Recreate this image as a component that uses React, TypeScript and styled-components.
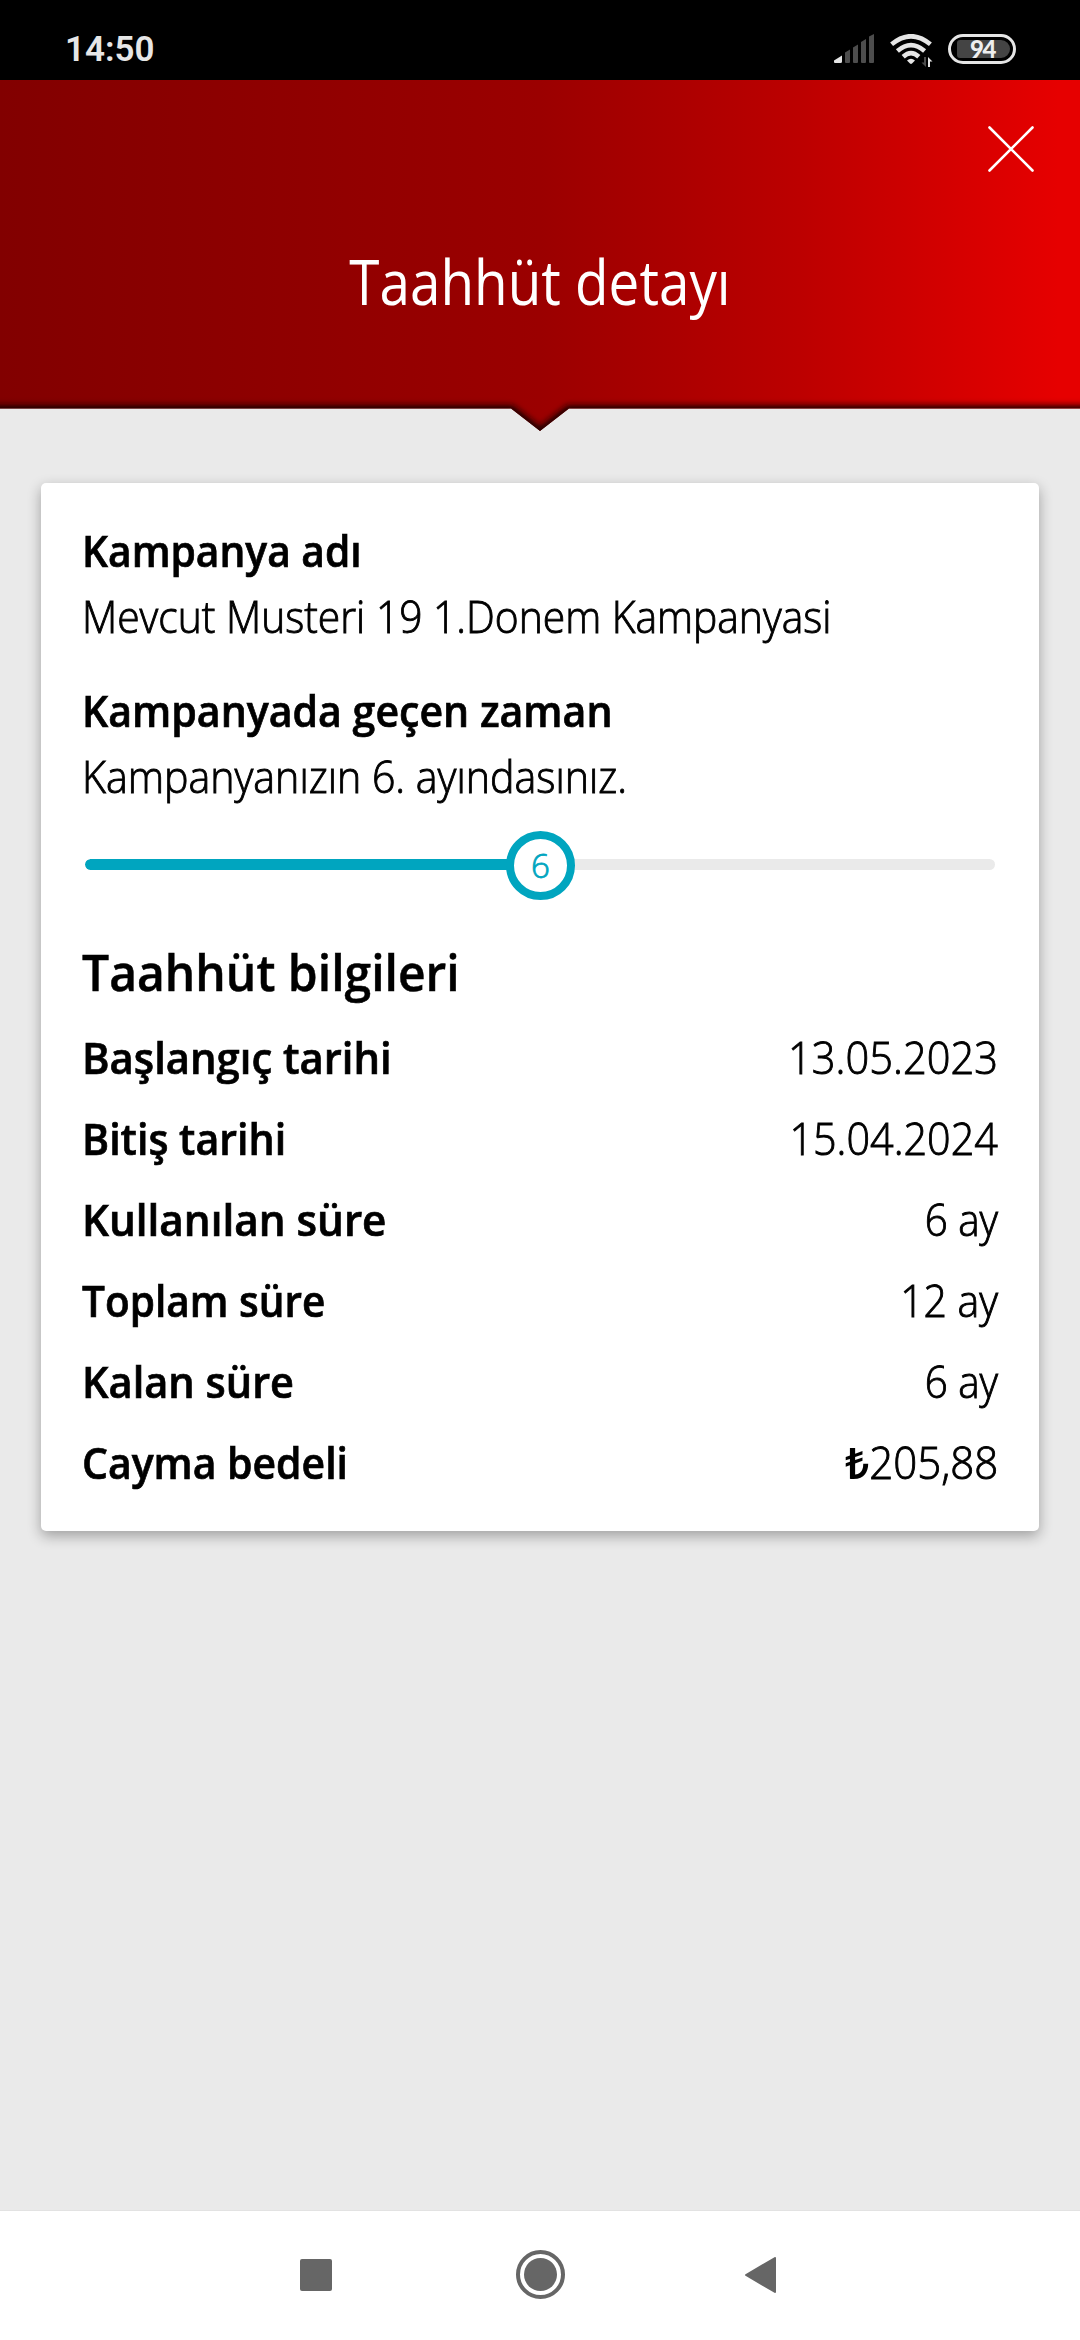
import React from "react";
import styled, { createGlobalStyle } from "styled-components";

const GlobalStyle = createGlobalStyle`
  *, *::before, *::after { box-sizing: border-box; }
  body {
    margin: 0;
    background: #eaeaea;
    font-family: "Open Sans", "Noto Sans", sans-serif;
    color: #000;
  }
`;

const Screen = styled.div`
  display: flex;
  flex-direction: column;
  width: 1080px;
  height: 2340px;
  background: #eaeaea;
  overflow: hidden;
`;

/* ---------- status bar ---------- */

const StatusBar = styled.div`
  display: flex;
  align-items: flex-start;
  justify-content: space-between;
  flex: none;
  height: 80px;
  padding: 30px 64px 0 65px;
  background: #000;
`;

const Clock = styled.span`
  font-family: Roboto, sans-serif;
  font-size: 35px;
  font-weight: 600;
  line-height: 40px;
  color: #e6e6e6;
`;

const StatusIcons = styled.div`
  display: flex;
  align-items: flex-start;
  padding-top: 4px;
`;

const SignalSvg = styled.svg`
  display: block;
  margin-right: 16px;
`;

const WifiSvg = styled.svg`
  display: block;
  margin-right: 14px;
`;

const Battery = styled.div`
  width: 68px;
  height: 30px;
  padding: 3px;
  border: 3px solid #e6e6e6;
  border-radius: 15px;
`;

const BatteryLevel = styled.div`
  display: flex;
  align-items: center;
  justify-content: center;
  width: 53px;
  height: 18px;
  margin-left: 3px;
  border-radius: 3px 9px 9px 3px;
  background: #444;
  color: #eee;
  font-family: Lato, sans-serif;
  font-size: 24px;
  font-weight: 900;
  letter-spacing: -1.5px;
  line-height: 18px;
  padding-right: 2px;
`;

/* ---------- header ---------- */

const Header = styled.header`
  position: relative;
  display: flex;
  flex-direction: column;
  flex: none;
  height: 351px;
  padding: 46px 46px 0;
  background: linear-gradient(90deg, #820000 0%, #9b0000 50%, #ab0000 62%, #bc0000 74%, #cf0000 85%, #e60000 98%);
  clip-path: polygon(0 0, 100% 0, 100% 328.5px, 569px 328.5px, 540px 351px, 511px 328.5px, 0 328.5px);
`;

const CloseButton = styled.button`
  align-self: flex-end;
  width: 46px;
  height: 46px;
  padding: 0;
  border: 0;
  background: none;
`;

const CloseSvg = styled.svg`
  display: block;
`;

const HeaderTitle = styled.h1`
  margin: 67px 0 0;
  font-size: 61.6px;
  font-weight: 400;
  line-height: 84px;
  text-align: center;
  color: #fff;
  transform: scaleX(0.89);
`;

const HeaderEdge = styled.svg`
  position: absolute;
  left: 0;
  bottom: 0;
`;

/* ---------- card ---------- */

const Main = styled.main`
  flex: 1;
  padding: 52px 41px 0;
`;

const Card = styled.section`
  height: 1048px;
  padding: 34px 41px 0;
  border-radius: 5px;
  background: #fff;
  box-shadow: 0 5px 14px rgba(0, 0, 0, 0.32);
`;

const Block = styled.div`
  margin-bottom: 28px;
`;

const Text = styled.p<{ $bold?: boolean; $end?: boolean; $fit: number; $line?: number }>`
  margin: 0;
  font-size: 44px;
  font-weight: ${(p) => (p.$bold ? 600 : 300)};
  line-height: ${(p) => p.$line ?? 66}px;
  white-space: nowrap;
  transform: scaleX(${(p) => p.$fit});
  transform-origin: ${(p) => (p.$end ? "right" : "left")};
  -webkit-text-stroke: ${(p) => (p.$bold ? "0.7px" : "0.9px")} currentColor;
`;

const Currency = styled.span`
  font-weight: 600;
  -webkit-text-stroke: 0;
`;

const SectionTitle = styled.h2`
  margin: 38px 0 13px;
  font-size: 51px;
  font-weight: 600;
  line-height: 66px;
  white-space: nowrap;
  transform: scaleX(0.9417);
  transform-origin: left;
  -webkit-text-stroke: 0.5px currentColor;
`;

const Slider = styled.div`
  position: relative;
  display: flex;
  align-items: center;
  height: 69px;
  margin: -6px 3px 0;
`;

const Track = styled.div`
  width: 100%;
  height: 11px;
  margin-bottom: 2px;
  border-radius: 6px;
  background: #eaeaea;
  overflow: hidden;
`;

const TrackFill = styled.div`
  height: 100%;
  border-radius: 6px 0 0 6px;
  background: #00a5bf;
`;

const Knob = styled.div`
  position: absolute;
  top: 0;
  display: flex;
  align-items: center;
  justify-content: center;
  width: 69px;
  height: 69px;
  margin-left: -34px;
  border: 8px solid #00a5bf;
  border-radius: 50%;
  background: #fff;
  color: #00a5bf;
  font-size: 33px;
  font-weight: 300;
  line-height: 53px;
  -webkit-text-stroke: 0.8px currentColor;
`;

const Row = styled.div`
  display: flex;
  justify-content: space-between;
`;

/* ---------- navigation bar ---------- */

const NavBar = styled.nav`
  display: flex;
  align-items: center;
  flex: none;
  height: 130px;
  padding: 0 0 2px 300px;
  border-top: 1px solid #e2e2e2;
  background: #fff;
`;

const RecentsIcon = styled.div`
  width: 32px;
  height: 32px;
  border-radius: 2px;
  background: #666;
`;

const HomeIcon = styled.div`
  width: 49px;
  height: 49px;
  padding: 4px;
  margin: 0 180px 0 184px;
  border: 4px solid #666;
  border-radius: 50%;
  background: #666 content-box;
`;

const BackSvg = styled.svg`
  display: block;
`;

const details = [
  { label: "Başlangıç tarihi", labelFit: 0.9498, value: "13.05.2023", valueFit: 0.9454 },
  { label: "Bitiş tarihi", labelFit: 0.9357, value: "15.04.2024", valueFit: 0.9395 },
  { label: "Kullanılan süre", labelFit: 0.9598, value: "6 ay", valueFit: 0.917 },
  { label: "Toplam süre", labelFit: 0.9213, value: "12 ay", valueFit: 0.932 },
  { label: "Kalan süre", labelFit: 0.9446, value: "6 ay", valueFit: 0.917 },
  { label: "Cayma bedeli", labelFit: 0.9302, currency: "₺", value: "205,88", valueFit: 0.955 },
];

const usedMonths = 6;
const totalMonths = 12;

export default function App() {
  const progress = `${(usedMonths / totalMonths) * 100}%`;
  return (
    <Screen>
      <GlobalStyle />
      <StatusBar>
        <Clock>14:50</Clock>
        <StatusIcons>
          <SignalSvg width="40" height="30" viewBox="0 0 40 30">
            <path d="M0 28V26.5L8 21.500V27.500Q8 29 6.500 29H1Q0 29 0 28Z" fill="#e6e6e6" />
            <g fill="#4d4d4d">
              <path d="M11 18.500L16 15.500V28Q16 29 15 29H12Q11 29 11 28Z" />
              <path d="M19 13.500L24 10.500V28Q24 29 23 29H20Q19 29 19 28Z" />
              <path d="M27 8L32 5V28Q32 29 31 29H28Q27 29 27 28Z" />
              <path d="M35 2.500L40 0V28Q40 29 39 29H36Q35 29 35 28Z" />
            </g>
          </SignalSvg>
          <WifiSvg width="44" height="34" viewBox="0 0 44 34">
            <g fill="none" stroke="#e6e6e6" strokeWidth="4.600">
              <path d="M1.600 10.300Q21 -5.800 40.400 10.300" />
              <path d="M7.400 17Q21 5.200 34.600 17" />
              <path d="M13.200 22.800Q21 15.600 28.800 22.800" />
            </g>
            <path d="M17 26.500Q21 22.800 25 26.500L22 29.600Q21 30.500 20 29.600Z" fill="#e6e6e6" />
            <path d="M36 23V33L31.500 28.500H34V23Z" fill="#4d4d4d" />
            <path d="M38 33V23L42.500 27.500H40V33Z" fill="#e6e6e6" />
          </WifiSvg>
          <Battery>
            <BatteryLevel>94</BatteryLevel>
          </Battery>
        </StatusIcons>
      </StatusBar>

      <Header>
        <HeaderEdge width="1080" height="61" viewBox="0 0 1080 61">
          <defs>
            <filter id="edge" x="-20" y="0" width="1120" height="80" filterUnits="userSpaceOnUse">
              <feGaussianBlur stdDeviation="3" />
            </filter>
          </defs>
          <path
            d="M-20 40H511L540 62.500L569 40H1100"
            fill="none"
            stroke="#180000"
            strokeWidth="9"
            filter="url(#edge)"
          />
        </HeaderEdge>
        <CloseButton aria-label="Kapat">
          <CloseSvg width="46" height="46" viewBox="0 0 46 46">
            <path d="M1.500 1.500L44.500 44.500M44.500 1.500L1.500 44.500" stroke="#fff" strokeWidth="2.600" strokeLinecap="round" />
          </CloseSvg>
        </CloseButton>
        <HeaderTitle>Taahhüt detayı</HeaderTitle>
      </Header>

      <Main>
        <Card>
          <Block>
            <Text $bold $fit={0.9258}>Kampanya adı</Text>
            <Text $fit={0.9264}>Mevcut Musteri 19 1.Donem Kampanyasi</Text>
          </Block>
          <Block>
            <Text $bold $fit={0.9336}>Kampanyada geçen zaman</Text>
            <Text $fit={0.9342}>Kampanyanızın 6. ayındasınız.</Text>
          </Block>
          <Slider>
            <Track>
              <TrackFill style={{ width: progress }} />
            </Track>
            <Knob style={{ left: progress }}>{usedMonths}</Knob>
          </Slider>
          <SectionTitle>Taahhüt bilgileri</SectionTitle>
          {details.map((d) => (
            <Row key={d.label}>
              <Text $bold $line={81} $fit={d.labelFit}>{d.label}</Text>
              <Text $end $line={81} $fit={d.valueFit}>
                {d.currency && <Currency>{d.currency}</Currency>}
                {d.value}
              </Text>
            </Row>
          ))}
        </Card>
      </Main>

      <NavBar>
        <RecentsIcon />
        <HomeIcon />
        <BackSvg width="31" height="36" viewBox="0 0 31 36">
          <path d="M1 18L30 1V35Z" fill="#666" stroke="#666" strokeWidth="2" strokeLinejoin="round" />
        </BackSvg>
      </NavBar>
    </Screen>
  );
}
